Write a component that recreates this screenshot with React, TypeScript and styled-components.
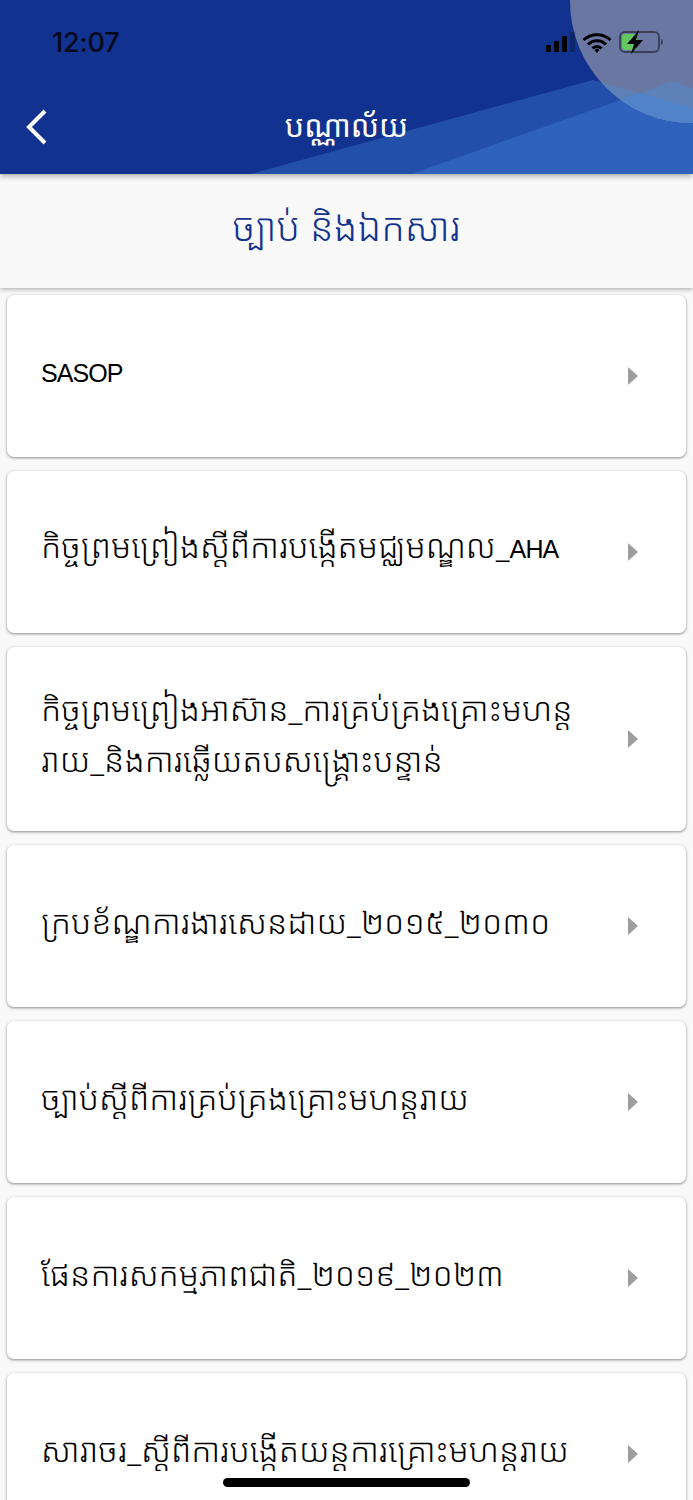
import React from 'react';
import styled, { createGlobalStyle } from 'styled-components';

const GlobalStyle = createGlobalStyle`
  html, body {
    margin: 0;
    padding: 0;
    background: #f9f9f9;
    font-family: "Noto Sans Khmer", "Khmer OS", "Noto Sans", "DejaVu Sans", "Liberation Sans", sans-serif;
  }
`;

const Page = styled.div`
  position: relative;
  width: 693px;
  height: 1500px;
  overflow: hidden;
  background: #f9f9f9;
`;

const Header = styled.header`
  position: relative;
  height: 174px;
  background: #12328f;
  overflow: hidden;
  box-shadow: 0 2px 6px rgba(0, 0, 0, 0.35);
  z-index: 2;
`;

const HeaderArt = styled.svg`
  position: absolute;
  inset: 0;
`;

const StatusBar = styled.div`
  position: relative;
  display: flex;
  justify-content: space-between;
  align-items: center;
  height: 84px;
  padding: 0 28px 0 52px;
  box-sizing: border-box;
`;

const Clock = styled.span`
  font-family: Inter, "Liberation Sans", sans-serif;
  font-size: 27px;
  font-weight: 500;
  letter-spacing: -0.2px;
  color: #05091c;
`;

const NavBar = styled.div`
  position: relative;
  display: flex;
  align-items: center;
  justify-content: center;
  height: 86px;
`;

const BackButton = styled.svg`
  position: absolute;
  left: 24px;
  top: 25px;
`;

const NavTitle = styled.h1`
  margin: 0 0 4px;
  font-size: 30.5px;
  font-weight: 400;
  color: #fff;
`;

const SubHeader = styled.div`
  position: relative;
  display: flex;
  align-items: center;
  justify-content: center;
  height: 114px;
  background: #f9f9f9;
  box-shadow: 0 1px 5px rgba(0, 0, 0, 0.35);
  z-index: 1;
`;

const SubTitle = styled.h2`
  margin: 0 0 10px;
  font-size: 38.5px;
  font-weight: 350;
  color: #12328f;
`;

const List = styled.div`
  display: flex;
  flex-direction: column;
  gap: 14px;
  padding: 7px 7px 0;
`;

const Card = styled.div`
  display: flex;
  align-items: center;
  justify-content: space-between;
  flex-shrink: 0;
  min-height: 162px;
  padding: 36px 48px 36px 34px;
  box-sizing: border-box;
  background: #fff;
  border-radius: 7px;
  box-shadow: 0 1px 3px rgba(0, 0, 0, 0.45);
`;

const CardText = styled.div`
  width: 545px;
  margin-bottom: 10px;
  font-size: 33px;
  font-weight: 350;
  line-height: 51px;
  color: #000;
`;

const Latin = styled.span`
  font-family: "Liberation Sans", Arial, sans-serif;
  font-size: 25px;
  font-weight: 400;
  letter-spacing: -0.9px;
`;

const Arrow = styled.span`
  width: 0;
  height: 0;
  border-left: 10px solid #9e9e9e;
  border-top: 9px solid transparent;
  border-bottom: 9px solid transparent;
`;

const HomeBar = styled.div`
  position: absolute;
  left: 223px;
  bottom: 13px;
  width: 247px;
  height: 9px;
  border-radius: 5px;
  background: #000;
  z-index: 3;
`;

const items: { id: string; label: React.ReactNode }[] = [
  { id: 'sasop', label: <Latin>SASOP</Latin> },
  { id: 'aha', label: <>កិច្ចព្រមព្រៀងស្តីពីការបង្កើតមជ្ឈមណ្ឌល_<Latin>AHA</Latin></> },
  { id: 'asean', label: 'កិច្ចព្រមព្រៀងអាស៊ាន_ការគ្រប់គ្រងគ្រោះមហន្តរាយ_និងការឆ្លើយតបសង្គ្រោះបន្ទាន់' },
  { id: 'sendai', label: 'ក្របខ័ណ្ឌការងារសេនដាយ_២០១៥_២០៣០' },
  { id: 'law', label: 'ច្បាប់ស្តីពីការគ្រប់គ្រងគ្រោះមហន្តរាយ' },
  { id: 'plan', label: 'ផែនការសកម្មភាពជាតិ_២០១៩_២០២៣' },
  { id: 'circular', label: 'សារាចរ_ស្តីពីការបង្កើតយន្តការគ្រោះមហន្តរាយ' },
];

const App: React.FC = () => {
  return (
    <Page>
      <GlobalStyle />
      <Header>
        <HeaderArt width="693" height="174" viewBox="0 0 693 174">
          <defs>
            <clipPath id="bubble">
              <circle cx="692" cy="1" r="122" />
            </clipPath>
          </defs>
          <polygon points="250,174 593,80 640,93 672,81 693,88 693,174" fill="#224fa9" />
          <polygon points="411,174 640,93 693,108 693,174" fill="#2e62bd" />
          <g clipPath="url(#bubble)">
            <rect x="560" y="0" width="133" height="130" fill="#6b77a3" />
            <polygon points="250,174 593,80 640,93 672,81 693,88 693,174" fill="#5d80b6" />
            <polygon points="411,174 640,93 693,108 693,174" fill="#5083c8" />
          </g>
        </HeaderArt>
        <StatusBar>
          <Clock>12:07</Clock>
          <svg width="120" height="24" viewBox="0 0 120 24">
            <rect x="1" y="15" width="5" height="7" rx="1" fill="#000" />
            <rect x="9" y="11" width="5" height="11" rx="1" fill="#000" />
            <rect x="17" y="6" width="5" height="16" rx="1" fill="#000" />
            <rect x="25" y="2" width="5" height="20" rx="1" fill="#000" fillOpacity="0.25" />
            <path d="M38.500 10a20 20 0 0 1 27 0M43 14.500a12.500 12.500 0 0 1 18 0M47.500 18.500a6 6 0 0 1 9 0" fill="none" stroke="#000" strokeWidth="3" />
            <path d="M49.500 20l2.500-1.500 2.500 1.500-2.500 3z" fill="#000" />
            <rect x="75" y="2" width="39" height="20" rx="5" fill="none" stroke="#000" strokeOpacity="0.45" strokeWidth="2" />
            <rect x="77" y="4" width="15" height="16" rx="3" fill="#63c95f" />
            <path d="M116 9v6a3 3 0 0 0 2-3 3 3 0 0 0-2-3z" fill="#000" fillOpacity="0.45" />
            <path d="M94 0L82 14h7l-3 10 12-14h-7z" fill="#000" />
          </svg>
        </StatusBar>
        <NavBar>
          <BackButton width="26" height="36" viewBox="0 0 26 36">
            <path d="M21 2L5 18l16 16" fill="none" stroke="#fff" strokeWidth="4" />
          </BackButton>
          <NavTitle>បណ្ណាល័យ</NavTitle>
        </NavBar>
      </Header>
      <SubHeader>
        <SubTitle>ច្បាប់ និងឯកសារ</SubTitle>
      </SubHeader>
      <List>
        {items.map((item) => (
          <Card key={item.id}>
            <CardText>{item.label}</CardText>
            <Arrow />
          </Card>
        ))}
      </List>
      <HomeBar />
    </Page>
  );
};

export default App;
